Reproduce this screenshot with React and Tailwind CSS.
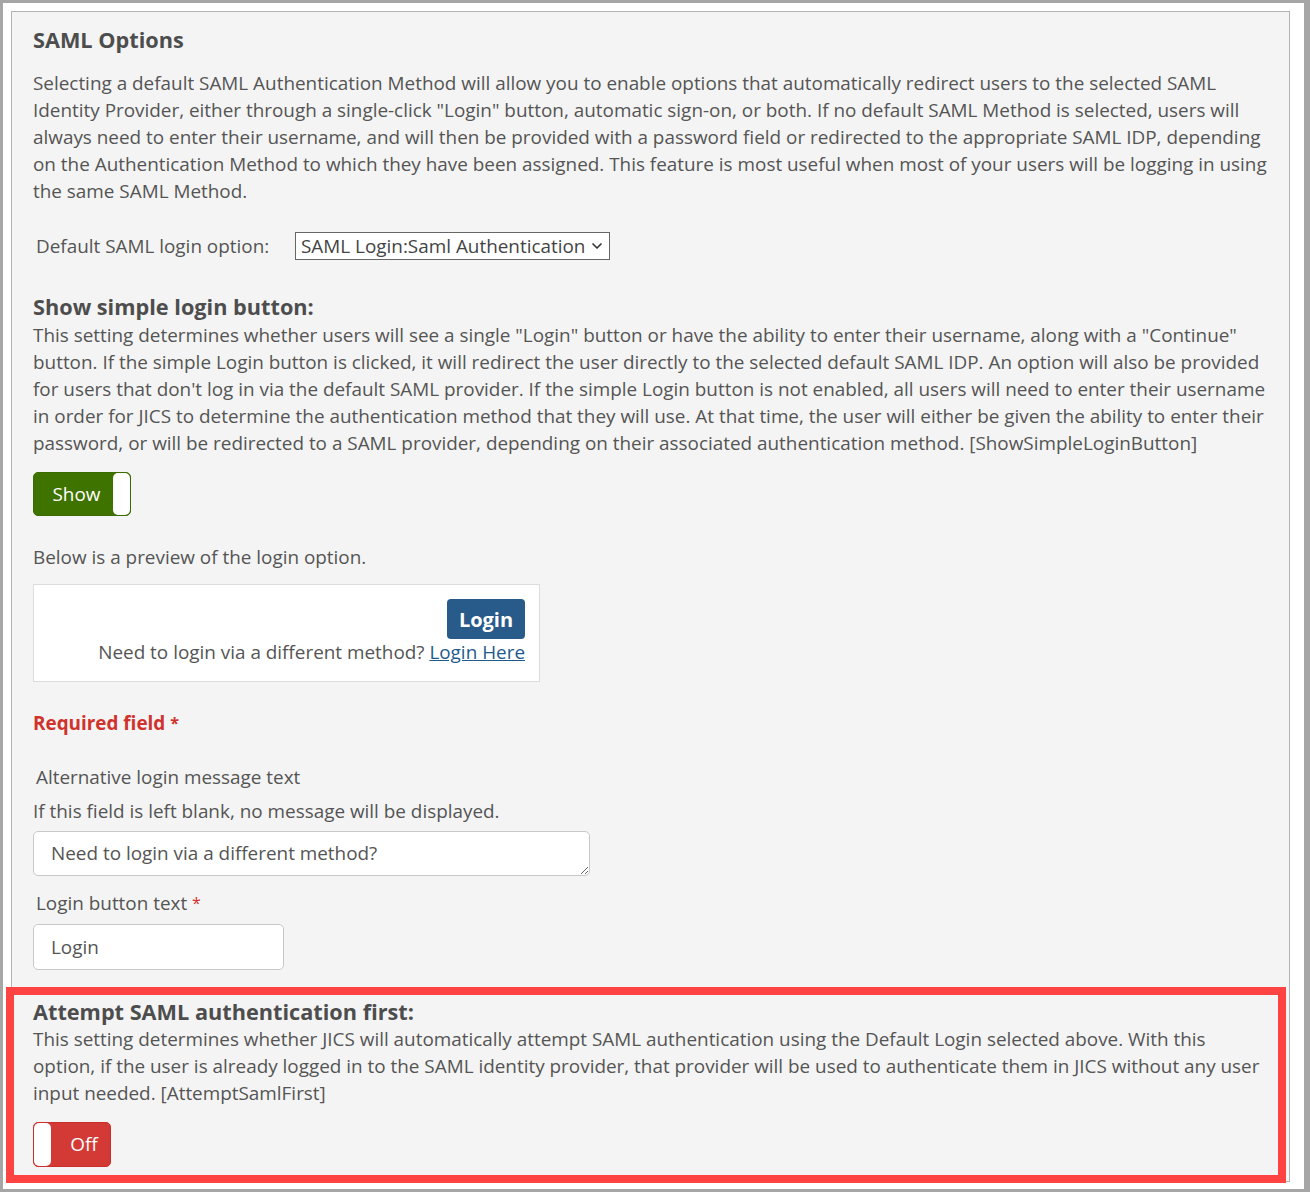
import React from 'react';
import { ChevronDown } from 'lucide-react';

const Toggle = ({ on }) => {
    if (on) {
        return (
            <div className='flex items-stretch w-[98px] h-[44px] rounded-[5px] bg-[#3f7300] border border-[#3a6b00] overflow-hidden'>
                <span className='flex-1 flex items-center justify-center pl-[6px] text-white text-[18.9px]'>Show</span>
                <span className='w-[17px] bg-white rounded-[5px]'></span>
            </div>
        );
    }
    return (
        <div className='flex items-stretch w-[78px] h-[45px] rounded-[5px] bg-[#d33a35] border border-[#c9302c] overflow-hidden'>
            <span className='w-[17px] bg-white rounded-[5px]'></span>
            <span className='flex-1 flex items-center justify-center pl-[7px] text-white text-[18.9px]'>Off</span>
        </div>
    );
};

const App = () => {
    return (
        <div className="relative w-[1310px] h-[1192px] bg-white border-t-[3px] border-l-[3px] border-r-[6px] border-b-[3px] border-[#a6a6a6] pt-[8px] pl-[8px] pr-[14px] text-[#555] text-[18.9px] leading-[27px]" style={{ fontFamily: '"Open Sans", "Noto Sans", sans-serif' }}>
            <div className="h-[1171px] bg-[#f4f4f4] border border-[#b3b3b3] pt-[14px] px-[21px]">
                <h2 className="text-[21.7px] leading-[28px] font-bold text-[#4d4d4d]">SAML Options</h2>
                <p className="mt-[16px]">
                    Selecting a default SAML Authentication Method will allow you to enable options that automatically redirect users to the selected SAML Identity Provider, either through a single-click "Login" button, automatic sign-on, or both. If no default SAML Method is selected, users will always need to enter their username, and will then be provided with a password field or redirected to the appropriate SAML IDP, depending on the Authentication Method to which they have been assigned. This feature is most useful when most of your users will be logging in using the same SAML Method.
                </p>

                <div className="mt-[27px] flex items-center h-[28px]">
                    <span className="pl-[3px] w-[262px]">Default SAML login option:</span>
                    <div className="flex items-center h-[28px] w-[315px] bg-white border border-[#666] pl-[5px] pr-[4px] text-[#444]">
                        <span className="flex-1 whitespace-nowrap">SAML Login:Saml Authentication</span>
                        <ChevronDown size={16} strokeWidth={2.5} className="text-[#333]" />
                    </div>
                </div>

                <h2 className="mt-[33px] text-[21.7px] leading-[28px] font-bold text-[#4d4d4d]">Show simple login button:</h2>
                <p className="mt-[1px]">
                    This setting determines whether users will see a single "Login" button or have the ability to enter their username, along with a "Continue" button. If the simple Login button is clicked, it will redirect the user directly to the selected default SAML IDP. An option will also be provided for users that don't log in via the default SAML provider. If the simple Login button is not enabled, all users will need to enter their username in order for JICS to determine the authentication method that they will use. At that time, the user will either be given the ability to enter their password, or will be redirected to a SAML provider, depending on their associated authentication method. [ShowSimpleLoginButton]
                </p>

                <div className="mt-[15px]">
                    <Toggle on />
                </div>

                <p className="mt-[28px]">Below is a preview of the login option.</p>

                <div className="mt-[13px] w-[507px] bg-white border border-[#dcdcdc] pt-[14px] pb-[15px] pr-[14px] flex flex-col items-end">
                    <button className="h-[40px] w-[78px] rounded-[4px] bg-[#285a8a] text-white font-bold text-[20px]">Login</button>
                    <p>Need to login via a different method? <a className="text-[#1f5a8c] underline">Login Here</a></p>
                </div>

                <p className="mt-[28px] font-bold text-[#d0322d]">Required field <span className="text-[16px] align-top">*</span></p>

                <p className="mt-[27px] pl-[3px]">Alternative login message text</p>
                <p className="mt-[7px]">If this field is left blank, no message will be displayed.</p>
                <textarea readOnly defaultValue="Need to login via a different method?" className="mt-[6px] block w-[557px] h-[45px] bg-white border border-[#c8c8c8] rounded-[5px] pl-[17px] pt-[8px] text-[#555] leading-[27px] outline-none" />

                <p className="mt-[14px] pl-[3px]">Login button text <span className="text-[#d0322d] text-[16px] align-top">*</span></p>
                <div className="mt-[7px] w-[251px] h-[46px] flex items-center bg-white border border-[#c8c8c8] rounded-[5px] pl-[17px]">Login</div>

                <h2 className="mt-[28px] text-[21.7px] leading-[28px] font-bold text-[#4d4d4d]">Attempt SAML authentication first:</h2>
                <p>
                    This setting determines whether JICS will automatically attempt SAML authentication using the Default Login selected above. With this option, if the user is already logged in to the SAML identity provider, that provider will be used to authenticate them in JICS without any user input needed. [AttemptSamlFirst]
                </p>
                <div className="mt-[15px]">
                    <Toggle />
                </div>
            </div>

            <div className="absolute left-[3px] top-[984px] w-[1280px] h-[196px] border-[8px] border-[#ff4343] pointer-events-none"></div>
        </div>
    );
};

export default App;
